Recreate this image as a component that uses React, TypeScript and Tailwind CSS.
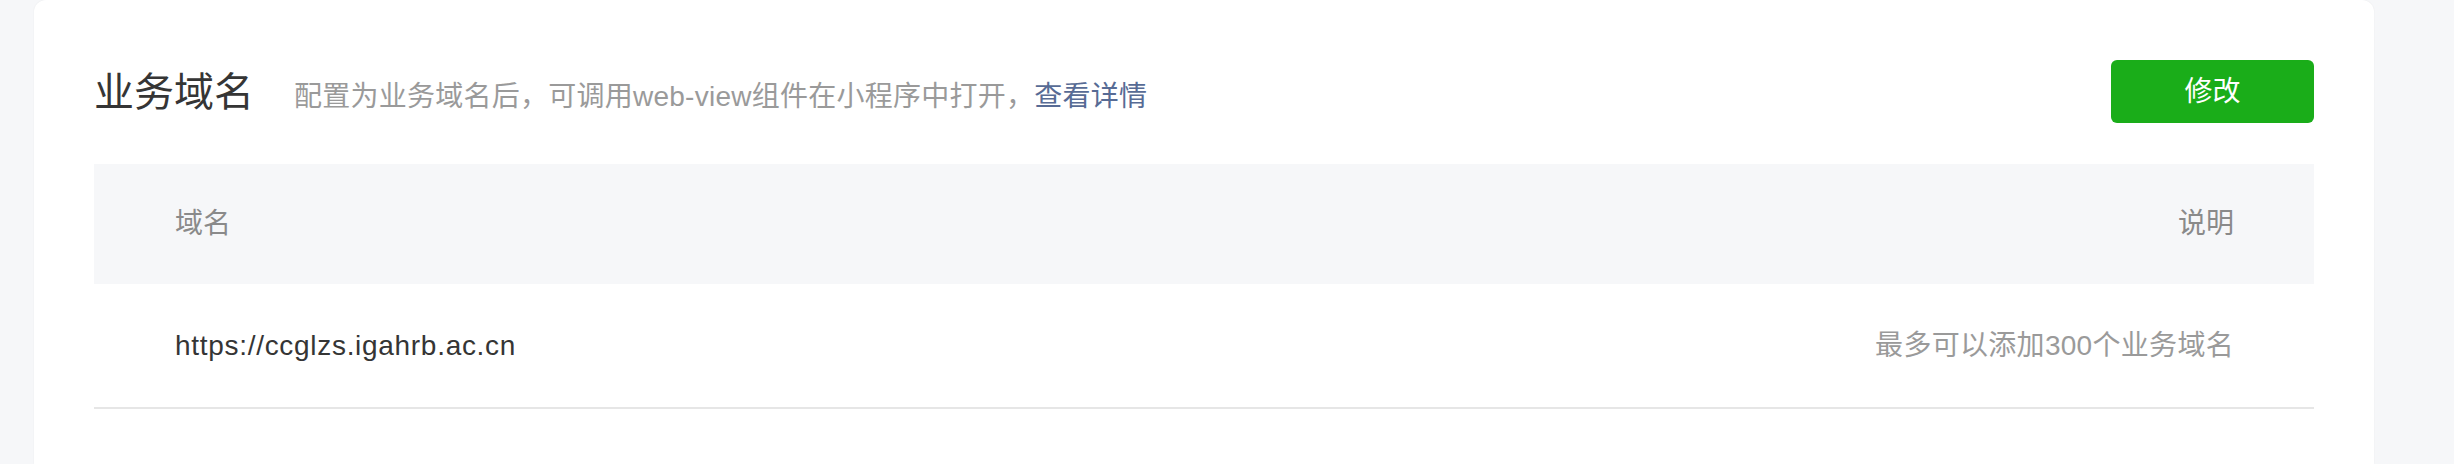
const font = "font-['Liberation_Sans','Noto_Sans_CJK_SC',sans-serif]";

function DomainTable() {
    return (
        <div className="mt-[41px]">
            <div className="flex h-[120px] items-center justify-between bg-[#f6f7f9] pl-[81px] pr-[80px] text-[28px] text-[#8a8a8a]">
                <span>域名</span>
                <span>说明</span>
            </div>
            <div className="flex h-[125px] items-center justify-between border-b-2 border-[#e6e6e6] pl-[81px] pr-[80px] text-[28px]">
                <span className="tracking-[0.7px] text-[#353535]">https://ccglzs.igahrb.ac.cn</span>
                <span className="tracking-[0.3px] text-[#9a9a9a]">最多可以添加300个业务域名</span>
            </div>
        </div>
    )
}

export default function App() {
    return (
        <div className={`h-[464px] overflow-hidden bg-[#f6f7f9] pl-[34px] pr-[80px] ${font}`}>
            <div className="h-full rounded-t-[12px] bg-white px-[60px] pt-[60px] shadow-[0_0_2px_rgba(0,0,0,0.06)]">
                <div className="flex h-[63px] items-center justify-between">
                    <div className="flex items-baseline">
                        <h1 className="text-[40px] text-[#353535]">业务域名</h1>
                        <p className="ml-[40px] text-[28px] tracking-[0.25px] text-[#9a9a9a]">
                            配置为业务域名后，可调用web-view组件在小程序中打开，<a className="text-[#576b95]">查看详情</a>
                        </p>
                    </div>
                    <button className="h-[63px] w-[203px] rounded-[6px] bg-[#1aad19] text-[28px] text-white">修改</button>
                </div>
                <DomainTable />
            </div>
        </div>
    )
}
